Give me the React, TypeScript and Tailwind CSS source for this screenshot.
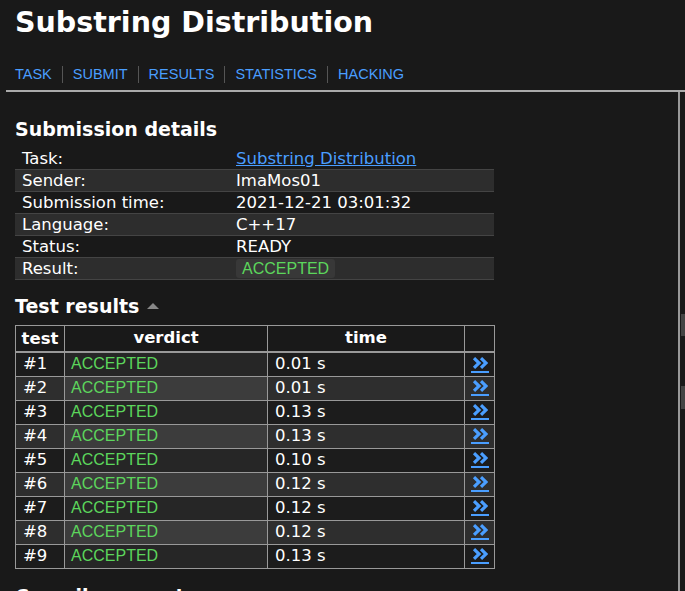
import React from "react";

const tests = [
  ["#1", "0.01 s"],
  ["#2", "0.01 s"],
  ["#3", "0.13 s"],
  ["#4", "0.13 s"],
  ["#5", "0.10 s"],
  ["#6", "0.12 s"],
  ["#7", "0.12 s"],
  ["#8", "0.12 s"],
  ["#9", "0.13 s"],
];

const details: [string, React.ReactNode][] = [
  ["Task:", <a href="#" className="text-[#4a9eff] underline">Substring Distribution</a>],
  ["Sender:", "ImaMos01"],
  ["Submission time:", "2021-12-21 03:01:32"],
  ["Language:", "C++17"],
  ["Status:", "READY"],
  [
    "Result:",
    <span className="bg-[#383838] rounded-[3px] px-[6px] py-px text-[#5cd65c] font-['Liberation_Sans',sans-serif] text-[16px]">ACCEPTED</span>,
  ],
];

function Chevrons() {
  return (
    <a href="#" className="inline-block align-middle border-b-2 border-[#4a9eff] pb-[2px] px-px">
      <svg width="16" height="12" viewBox="0 0 16 12" className="block">
        <path d="M2 1.2 L7 6 L2 10.8" fill="none" stroke="#4a9eff" strokeWidth="3.2" />
        <path d="M9 1.2 L14 6 L9 10.8" fill="none" stroke="#4a9eff" strokeWidth="3.2" />
      </svg>
    </a>
  );
}

export default function App() {
  return (
    <div className="h-[591px] overflow-hidden bg-[#191919] text-white font-['DejaVu_Sans',sans-serif]">
      <div className="px-[15px] pt-[4px]">
        <h1 className="text-[28.5px] font-bold leading-[38px]">Substring Distribution</h1>
        <nav className="flex items-center mt-[22px] font-['Liberation_Sans',sans-serif] text-[14.5px] text-[#4a9eff]">
          {["TASK", "SUBMIT", "RESULTS", "STATISTICS", "HACKING"].map((t, i) => (
            <React.Fragment key={t}>
              {i > 0 && <span className="w-px h-[17px] bg-[#555] mx-[10px]" />}
              <a href="#">{t}</a>
            </React.Fragment>
          ))}
        </nav>
      </div>
      <div className="ml-[6px] mt-[4px] border-t-2 border-[#aaa] flex">
        <div className="flex-1 pl-[9px] pt-[24px]">
          <h2 className="text-[19px] font-bold leading-[26px]">Submission details</h2>
          <table className="mt-[6px] w-[479px] text-[16.5px] border-collapse">
            <tbody>
              {details.map(([k, v], i) => (
                <tr
                  key={k}
                  className={i % 2 ? "bg-[#2d2d2d] border-y border-[#444]" : ""}
                >
                  <td className="pl-[7px] h-[22px] w-[221px] leading-[20px]">{k}</td>
                  <td className="leading-[20px]">{v}</td>
                </tr>
              ))}
            </tbody>
          </table>
          <h2 className="text-[19px] font-bold leading-[26px] mt-[13px] flex items-center">
            Test results
            <span className="ml-[8px] w-0 h-0 border-x-[6px] border-x-transparent border-b-[6px] border-b-[#888]" />
          </h2>
          <table className="mt-[6px] w-[480px] text-[16.5px] border-collapse">
            <thead>
              <tr className="border-b-2 border-[#999]">
                <th className="border border-[#999] w-[49px] h-[21px] leading-[19px] font-bold">test</th>
                <th className="border border-[#999] w-[203px] font-bold">verdict</th>
                <th className="border border-[#999] w-[197px] font-bold">time</th>
                <th className="border border-[#999]"></th>
              </tr>
            </thead>
            <tbody>
              {tests.map(([n, t], i) => (
                <tr key={n} className={i % 2 ? "bg-[#2e2e2e]" : "bg-[#1c1c1c]"}>
                  <td className="border border-[#999] h-[24px] leading-[20px] pl-[7px]">{n}</td>
                  <td
                    className={`border border-[#999] pl-[6px] leading-[20px] font-['Liberation_Sans',sans-serif] text-[16px] text-[#5cd65c] ${
                      i % 2 ? "bg-[#3c3c3c]" : "bg-[#262626]"
                    }`}
                  >
                    ACCEPTED
                  </td>
                  <td className="border border-[#999] pl-[7px] leading-[20px]">{t}</td>
                  <td className="border border-[#999] text-center leading-none p-0">
                    <Chevrons />
                  </td>
                </tr>
              ))}
            </tbody>
          </table>
          <h2 className="text-[19px] font-bold leading-[26px] mt-[14px] flex items-center">
            Compiler report
            <span className="ml-[8px] w-0 h-0 border-x-[6px] border-x-transparent border-b-[6px] border-b-[#888]" />
          </h2>
        </div>
        <div className="w-[7px] border-l-2 border-[#999] pt-[222px]">
          <div className="h-[22px] bg-[#444] ml-px" />
          <div className="h-[23px] bg-[#444] ml-px mt-[50px]" />
        </div>
      </div>
    </div>
  );
}
